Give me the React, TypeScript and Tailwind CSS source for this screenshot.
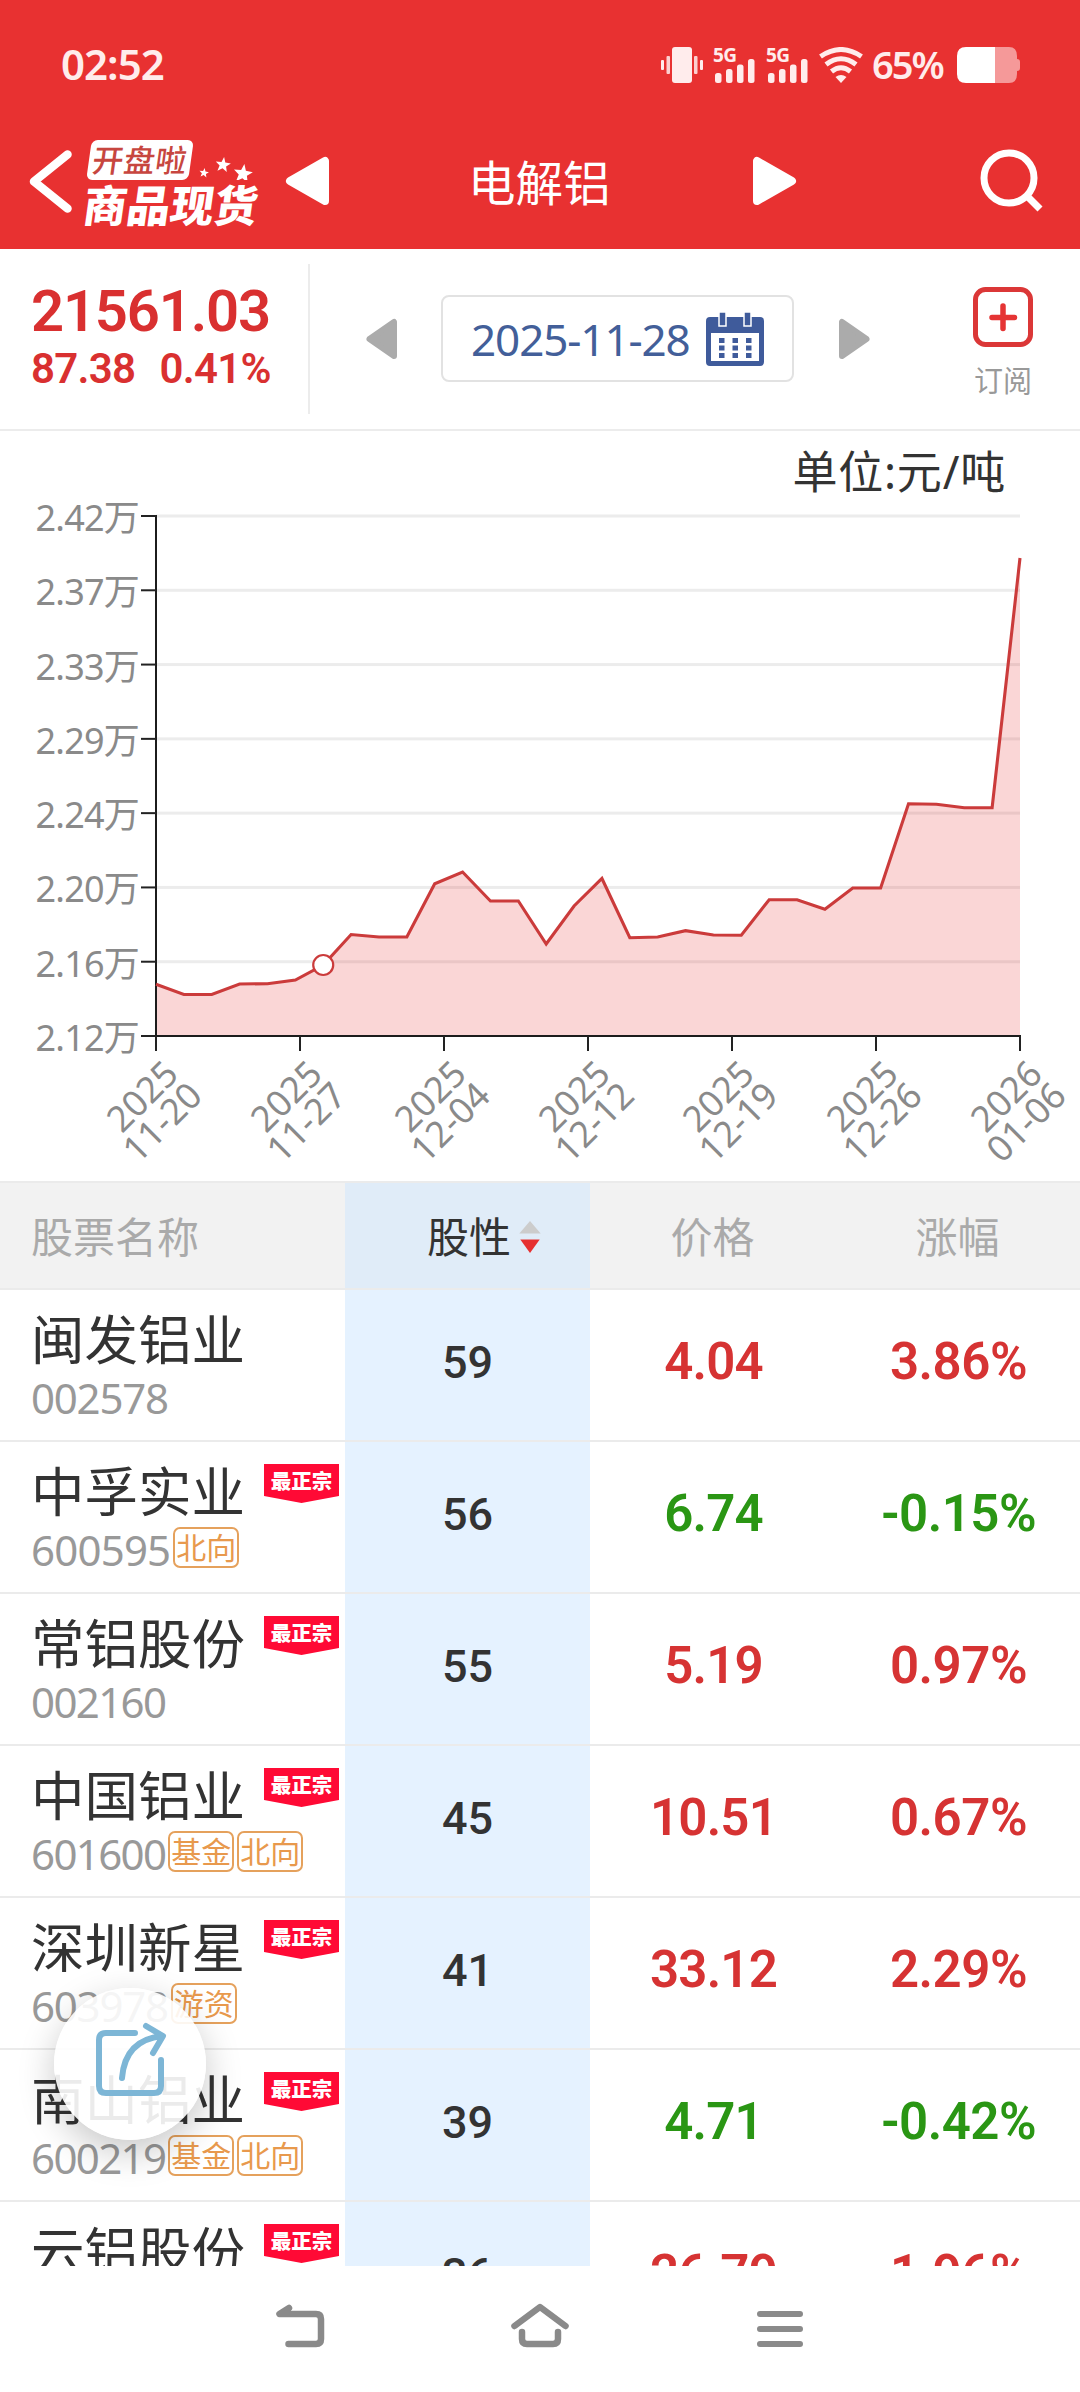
import React from 'react';

type Stock = {
  name: string;
  code: string;
  tags: string[];
  best: boolean;
  score: number;
  price: string;
  change: string;
};

const STOCKS: Stock[] = [
  { name: '闽发铝业', code: '002578', tags: [], best: false, score: 59, price: '4.04', change: '3.86%' },
  { name: '中孚实业', code: '600595', tags: ['北向'], best: true, score: 56, price: '6.74', change: '-0.15%' },
  { name: '常铝股份', code: '002160', tags: [], best: true, score: 55, price: '5.19', change: '0.97%' },
  { name: '中国铝业', code: '601600', tags: ['基金', '北向'], best: true, score: 45, price: '10.51', change: '0.67%' },
  { name: '深圳新星', code: '603978', tags: ['游资'], best: true, score: 41, price: '33.12', change: '2.29%' },
  { name: '南山铝业', code: '600219', tags: ['基金', '北向'], best: true, score: 39, price: '4.71', change: '-0.42%' },
  { name: '云铝股份', code: '000807', tags: [], best: true, score: 36, price: '26.79', change: '1.96%' },
];

const Y_LABELS = ['2.42万', '2.37万', '2.33万', '2.29万', '2.24万', '2.20万', '2.16万', '2.12万'];

const X_LABELS = [
  ['2025', '11-20'],
  ['2025', '11-27'],
  ['2025', '12-04'],
  ['2025', '12-12'],
  ['2025', '12-19'],
  ['2025', '12-26'],
  ['2026', '01-06'],
];

// plot heights, in chart units
const SERIES = [
  984.3, 994.5, 994.5, 984, 983.7, 980, 965, 934.5, 937, 937, 883.7, 872, 901, 901, 944, 906,
  878.5, 937.7, 937, 930.7, 935, 935.3, 899.7, 899.7, 909.3, 888, 888, 803.7, 804.3, 807.7, 807.7, 558,
];

const LEFT = 156;
const RIGHT = 1020;
const TOP = 516;
const BOTTOM = 1036;
const SELECTED = 6;

const pointX = (i: number) => LEFT + (i * (RIGHT - LEFT)) / (SERIES.length - 1);

// 1 and 7 are set tighter than the other digits
const codeSpacing = (code: string) => {
  const ones = code.split('1').length - 1;
  const sevens = code.split('7').length - 1;
  return -0.8 - (ones * 5 + sevens * 2.5) / code.length;
};

const SignalIcon: React.FC = () => (
  <div className="relative h-9 w-[42px]">
    <span className="absolute left-0 top-0 font-['Noto_Sans'] text-[19px] font-bold leading-[16px] tracking-[-0.5px]">5G</span>
    <svg className="absolute left-[2px] top-3 h-6 w-10" viewBox="0 0 40 24" fill="currentColor">
      <rect x="0" y="14" width="6.5" height="10" rx="2.5" />
      <rect x="11" y="10" width="6.5" height="14" rx="2.5" />
      <rect x="22" y="5.5" width="6.5" height="18.5" rx="2.5" />
      <rect x="33" y="0" width="6.5" height="24" rx="2.5" />
    </svg>
  </div>
);

const StatusBar: React.FC = () => (
  <div className="flex h-[130px] items-center pl-[61px] pr-[60px] text-[#ffecec]">
    <span className="-mt-[3px] font-['Noto_Sans'] text-[42px] font-semibold leading-none tracking-[-1px]">02:52</span>
    <div className="ml-auto flex items-center">
      <svg className="h-9 w-[42px]" viewBox="0 0 42 36" fill="currentColor">
        <rect x="0" y="13" width="3" height="10" rx="1" />
        <rect x="5.5" y="9" width="3.5" height="18" rx="1" opacity=".85" />
        <rect x="11" y="0" width="20" height="36" rx="3" />
        <rect x="33" y="9" width="3.5" height="18" rx="1" opacity=".85" />
        <rect x="39" y="13" width="3" height="10" rx="1" />
      </svg>
      <div className="ml-[10px] flex gap-[11px]">
        <SignalIcon />
        <SignalIcon />
      </div>
      <svg className="ml-[11px] h-9 w-[44px]" viewBox="0 0 44 36" fill="none" stroke="currentColor" strokeWidth="5">
        <path d="M1.5 9.5Q22 -4.5 42.5 9.5" />
        <path d="M7 17.5Q22 6 37 17.5" />
        <path d="M12.5 24.5Q22 17 31.5 24.5" />
        <path d="M22 36L16.5 30Q22 26 27.5 30Z" fill="currentColor" stroke="none" />
      </svg>
      <span className="-mt-[3px] ml-[9px] w-[85px] whitespace-nowrap font-['Noto_Sans'] text-[38px] font-semibold leading-none tracking-[-2px]">65%</span>
      <svg className="h-9 w-[63px]" viewBox="0 0 63 36">
        <path d="M38 0H52Q60 0 60 9V12Q63 12 63 15V21Q63 24 60 24V27Q60 36 52 36H38Z" fill="#f59999" />
        <path d="M38 0H9Q0 0 0 9V27Q0 36 9 36H38Z" fill="#fff" />
      </svg>
    </div>
  </div>
);

const Star: React.FC<{ x: number; y: number; s: number }> = ({ x, y, s }) => (
  <path transform={`translate(${x} ${y}) rotate(8) scale(${s})`} d="M0-10L2.4-3.6L9.5-3.1L4.1 1.2L5.9 8.1L0 4.2L-5.9 8.1L-4.1 1.2L-9.5-3.1L-2.4-3.6Z" />
);

const TitleBar: React.FC = () => (
  <div className="flex h-[119px] items-start pt-[10px] text-white">
    <svg className="ml-[29px] mt-[10px] h-[66px] w-[46px]" viewBox="0 0 46 66" fill="none" stroke="currentColor" strokeWidth="8.5" strokeLinecap="round" strokeLinejoin="round">
      <path d="M38.5 4.5L5 31.5L38.5 58.500" />
    </svg>
    <div className="ml-[9px] w-[176px]">
      <div className="flex h-10 items-end">
        <div className="ml-[5px] flex h-10 w-[102px] -skew-x-8 items-center justify-center rounded-[6px] bg-white">
          <span className="text-[31px] font-medium leading-none tracking-[0.5px] text-[#c7463f]">开盘啦</span>
        </div>
        <svg className="ml-[6px] h-[32px] w-[60px]" viewBox="0 0 60 32" fill="currentColor">
          <Star x={7} y={25} s={0.5} />
          <Star x={26} y={17} s={0.8} />
          <Star x={46} y={26} s={1} />
        </svg>
      </div>
      <div className="mt-[4px] -skew-x-8 whitespace-nowrap text-[43.5px] font-black leading-[42px]">商品现货</div>
    </div>
    <svg className="ml-[25px] mt-[16px] h-[50px] w-[45px]" viewBox="0 0 45 50" fill="currentColor" stroke="currentColor" strokeWidth="8" strokeLinejoin="round">
      <path d="M5 25L40 5V45Z" />
    </svg>
    <h1 className="ml-[138px] mt-[18px] w-[146px] whitespace-nowrap text-[47.5px] leading-[50px]">电解铝</h1>
    <svg className="ml-[138px] mt-[16px] h-[50px] w-[45px]" viewBox="0 0 45 50" fill="currentColor" stroke="currentColor" strokeWidth="8" strokeLinejoin="round">
      <path d="M40 25L5 5V45Z" />
    </svg>
    <svg className="ml-auto mr-[34px] mt-[8px] h-[66px] w-[66px]" viewBox="0 0 66 66" fill="none" stroke="currentColor" strokeWidth="7">
      <circle cx="29" cy="30" r="25" />
      <path d="M47 48L60 61" />
    </svg>
  </div>
);

const CalendarIcon: React.FC = () => (
  <svg className="h-[54px] w-[58px]" viewBox="0 0 58 54" fill="#3f5b9b">
    <path d="M4 5H54Q58 5 58 9V50Q58 54 54 54H4Q0 54 0 50V9Q0 5 4 5ZM5 21V49H53V21Z" fillRule="evenodd" />
    <path d="M13 0H20V14H13ZM38 0H45V14H38Z" stroke="#fff" strokeWidth="1.5" />
    {[26, 33.5, 41].map((y) => [13, 26.5, 40].map((x) => <rect key={`${x}-${y}`} x={x} y={y} width="5.5" height="5" />))}
  </svg>
);

const QuoteBar: React.FC = () => (
  <div className="flex h-[182px] border-b-2 border-[#ececec]">
    <div className="mt-[15px] h-[150px] w-[310px] border-r-2 border-[#ececec] pl-[31px] pt-[18px] font-['Roboto'] text-[#d93030]">
      <div className="whitespace-nowrap text-[58px] font-semibold leading-[58px] tracking-[-1.2px]">21561.03</div>
      <div className="mt-[4px] flex gap-[24px] whitespace-nowrap text-[42px] font-semibold leading-[50px] tracking-[-0.7px]">
        <span>87.38</span>
        <span>0.41%</span>
      </div>
    </div>
    <svg className="ml-[56px] mt-[69px] h-[42px] w-[32px]" viewBox="0 0 32 42" fill="#ababab" stroke="#ababab" strokeWidth="6" strokeLinejoin="round">
      <path d="M3.5 21L28 4V38Z" />
    </svg>
    <div className="ml-[43px] mt-[46px] flex h-[87px] w-[353px] items-center rounded-[8px] border-2 border-[#e2e2e2] pl-[28px]">
      <span className="w-[235px] whitespace-nowrap font-['Noto_Sans'] text-[44px] leading-none tracking-[-1.1px] text-[#435f99]">2025-11-28</span>
      <CalendarIcon />
    </div>
    <svg className="ml-[44px] mt-[69px] h-[42px] w-[32px]" viewBox="0 0 32 42" fill="#ababab" stroke="#ababab" strokeWidth="6" strokeLinejoin="round">
      <path d="M28.5 21L4 4V38Z" />
    </svg>
    <div className="ml-[103px] mt-[38px] flex w-[60px] flex-col items-center">
      <svg className="h-[60px] w-[60px]" viewBox="0 0 60 60" fill="none" stroke="#db3737" strokeWidth="5" strokeLinecap="round">
        <rect x="2.5" y="2.5" width="55" height="55" rx="10" />
        <path d="M30 19V41.5M19 30.5H41.5" stroke="#e53434" strokeWidth="5.5" />
      </svg>
      <span className="mt-[15px] whitespace-nowrap text-[29px] leading-[38px] text-[#999]">订阅</span>
    </div>
  </div>
);

const PriceChart: React.FC = () => {
  const line = SERIES.map((y, i) => `${pointX(i)},${y}`).join(' ');
  const stepY = (BOTTOM - TOP) / (Y_LABELS.length - 1);
  const stepX = (RIGHT - LEFT) / (X_LABELS.length - 1);

  return (
    <div className="h-[750px]">
      <div className="flex h-[70px] items-center justify-end pr-[74px] pt-[11px] text-[45px] leading-none tracking-[0.8px] text-[#333]">单位:元/吨</div>
      <svg className="block h-[680px] w-[1080px]" viewBox="0 501 1080 680">
        {Y_LABELS.slice(0, -1).map((label, i) => (
          <rect key={label} x={LEFT} y={TOP + i * stepY - 1.5} width={RIGHT - LEFT} height="3" fill="#ececec" />
        ))}
        <polygon points={`${LEFT},${BOTTOM} ${line} ${RIGHT},${BOTTOM}`} fill="#e63232" fillOpacity="0.2" />
        <path d={`M${LEFT} ${TOP - 1}V${BOTTOM + 15}M${LEFT} ${BOTTOM}H${RIGHT + 1}`} stroke="#1c1c1c" strokeWidth="2" fill="none" />
        {Y_LABELS.map((label, i) => (
          <g key={label}>
            <rect x={LEFT - 15} y={TOP + i * stepY - 1} width="15" height="2" fill="#222" />
            <text x="139" y={TOP + i * stepY + 15} textAnchor="end" fontSize="36" letterSpacing="-0.8" fill="#8a8a8a">{label}</text>
          </g>
        ))}
        {X_LABELS.map(([year, day], i) => (
          <g key={day} fontSize="36" fill="#8a8a8a" textAnchor="middle">
            <rect x={LEFT + i * stepX - 1} y={BOTTOM} width="2" height="15" fill="#222" />
            <text transform={`translate(${LEFT + i * stepX - 14} ${BOTTOM + 60}) rotate(-45)`} y="13">{year}</text>
            <text transform={`translate(${LEFT + i * stepX + 6} ${BOTTOM + 86}) rotate(-45)`} y="13">{day}</text>
          </g>
        ))}
        <polyline points={line} fill="none" stroke="#cb3b3b" strokeWidth="3.1" />
        <circle cx={pointX(SELECTED)} cy={SERIES[SELECTED]} r="10" fill="#fff" stroke="#cb3b3b" strokeWidth="2.2" />
      </svg>
    </div>
  );
};

const TableHeader: React.FC = () => (
  <div className="flex h-[109px] border-y-2 border-[#ebebeb] bg-[#f2f2f2] text-[42px] leading-none text-[#aaa]">
    <div className="flex w-[345px] items-center pl-[31px] pt-[2px]">股票名称</div>
    <div className="flex w-[245px] items-center bg-[#e0ecf8] pl-[82px] pt-[2px] text-[#333]">
      股性
      <svg className="ml-[8px] h-[33px] w-[22px]" viewBox="0 0 22 34">
        <path d="M11 1L22 14H0Z" fill="#ccc" />
        <path d="M1 20H21L11 34Z" fill="#e63030" />
      </svg>
    </div>
    <div className="flex w-[245px] items-center justify-center pt-[2px]">价格</div>
    <div className="flex w-[245px] items-center justify-center pt-[2px]">涨幅</div>
  </div>
);

const StockRow: React.FC<{ stock: Stock }> = ({ stock }) => {
  const color = stock.change.startsWith('-') ? 'text-[#2a9614]' : 'text-[#d63333]';
  return (
    <div className="flex h-[152px] shrink-0 border-b-2 border-[#ebebeb]">
      <div className="w-[345px] pl-[31px]">
        <div className="flex h-[82px]">
          <span className="mt-[20px] w-[233px] whitespace-nowrap text-[53.5px] leading-[60px] text-[#333]">{stock.name}</span>
          {stock.best && (
            <div className="mt-[22px] h-[39px] w-[75px] bg-[#ff0a35] pt-[2px] text-center text-[20.5px] font-black leading-[31px] text-white [clip-path:polygon(0_0,100%_0,100%_82%,50%_100%,0_82%)]">
              最正宗
            </div>
          )}
        </div>
        <div className="mt-[3px] flex gap-[3px]">
          <span
            className="whitespace-nowrap font-['Noto_Sans'] text-[42px] leading-[46px] text-[#999]"
            style={{ letterSpacing: `${codeSpacing(stock.code)}px` }}
          >
            {stock.code}
          </span>
          {stock.tags.map((tag) => (
            <span key={tag} className="flex h-[41px] w-[66px] items-center justify-center rounded-[7px] border-2 border-[#e5a15c] text-[30px] leading-none text-[#e8994d]">
              {tag}
            </span>
          ))}
        </div>
      </div>
      <div className="flex w-[245px] items-center justify-center bg-[#e5f2ff] pb-[4px] font-['Roboto'] text-[45px] font-medium text-[#333]">{stock.score}</div>
      <div className={`flex w-[245px] items-center justify-center pb-[6px] pl-[2px] font-['Roboto'] text-[51px] font-semibold tracking-[-0.8px] ${color}`}>{stock.price}</div>
      <div className={`flex w-[245px] items-center justify-center pb-[6px] pl-[2px] font-['Roboto'] text-[51px] font-semibold tracking-[-0.5px] ${color}`}>{stock.change}</div>
    </div>
  );
};

const ShareButton: React.FC = () => (
  <button className="absolute left-[54px] top-[1988px] flex h-[152px] w-[152px] items-center justify-center rounded-full bg-white/90 shadow-[0_12px_36px_rgba(0,0,0,0.22)]">
    <svg className="h-[76px] w-[76px]" viewBox="92 2026 76 76" fill="none" stroke="#7db6d6" strokeWidth="6" strokeLinecap="round" strokeLinejoin="round" overflow="visible">
      <path d="M135 2033H106Q99 2033 99 2040V2086Q99 2093 106 2093H154Q161 2093 161 2086V2060" />
      <path d="M122 2078Q125 2040 162 2036M146 2026L163 2036L153 2053" />
    </svg>
  </button>
);

const NavBar: React.FC = () => (
  <div className="flex h-[126px] items-start bg-white pt-[36px] text-[#8a8a8a]">
    <svg className="ml-[272px] h-[50px] w-[56px]" viewBox="272 2302 56 50" fill="none" stroke="currentColor" strokeWidth="6.5" strokeLinecap="round" strokeLinejoin="round">
      <path d="M289 2308L279.5 2314H316Q321 2314 321 2319V2339Q321 2344 316 2344H288.5" />
    </svg>
    <svg className="ml-[180px] h-[50px] w-[64px]" viewBox="508 2302 64 50" fill="none" stroke="currentColor" strokeWidth="6.5" strokeLinecap="round" strokeLinejoin="round">
      <path d="M514.5 2326L540 2307L565.5 2326M522 2332V2339Q522 2344 527 2344H553Q558 2344 558 2339V2332" />
    </svg>
    <svg className="ml-[180px] h-[50px] w-[56px]" viewBox="752 2302 56 50" fill="none" stroke="currentColor" strokeWidth="6" strokeLinecap="round">
      <path d="M760 2314H800M760 2329H800M760 2344H800" />
    </svg>
  </div>
);

const App: React.FC = () => (
  <div className="relative flex h-[2392px] w-[1080px] flex-col overflow-hidden bg-white font-['Noto_Sans','Noto_Sans_CJK_SC',sans-serif]">
    <header className="h-[249px] bg-[#e83131]">
      <StatusBar />
      <TitleBar />
    </header>
    <QuoteBar />
    <PriceChart />
    <TableHeader />
    <div className="flex h-[976px] flex-col overflow-hidden">
      {STOCKS.map((stock) => (
        <StockRow key={stock.code} stock={stock} />
      ))}
    </div>
    <NavBar />
    <ShareButton />
  </div>
);

export default App;
